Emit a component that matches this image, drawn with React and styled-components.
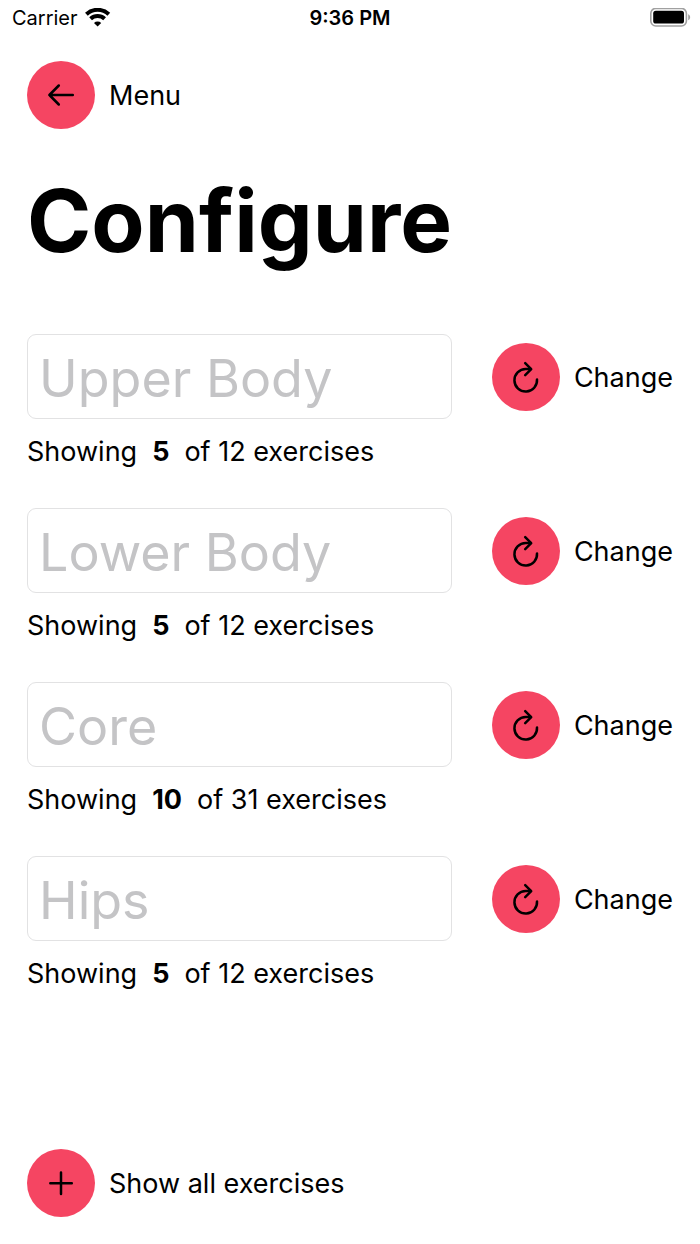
import React from 'react';
import styled, { createGlobalStyle } from 'styled-components';

const groups = [
  { id: 'upper', name: 'Upper Body', shown: 5, total: 12 },
  { id: 'lower', name: 'Lower Body', shown: 5, total: 12 },
  { id: 'core', name: 'Core', shown: 10, total: 31 },
  { id: 'hips', name: 'Hips', shown: 5, total: 12 },
];

const WifiIcon = () => (
  <svg width="26" height="20" viewBox="0 0 26 20" aria-hidden="true">
    <g fill="none" stroke="#000" strokeWidth="4">
      <path d="M1.4 6.2a16.4 16.4 0 0 1 22.4 0" />
      <path d="M5.6 10.8a10.2 10.2 0 0 1 14 0" />
    </g>
    <path d="M12.6 18.4l-3.6-3.5a5.2 5.2 0 0 1 7.2 0z" />
  </svg>
);

const BatteryIcon = () => (
  <svg width="42" height="20" viewBox="0 0 42 20" role="img" aria-label="Battery full">
    <rect x="0.8" y="0.4" width="35.6" height="17.6" rx="5" fill="none" stroke="#a0a0a0" strokeWidth="1.6" />
    <rect x="3.2" y="2.8" width="30.8" height="12.8" rx="2.6" />
    <path d="M38.2 6.2c2.6.9 2.6 5.1 0 6z" fill="#a0a0a0" />
  </svg>
);

const BackIcon = () => (
  <Icon viewBox="0 0 68 68" aria-hidden="true">
    <path d="M45.8 34H22.4M31.8 24.5L22.4 34l9.4 9.5" />
  </Icon>
);

const RedoIcon = () => (
  <Icon viewBox="0 0 68 68" aria-hidden="true">
    <path d="M45 36.4A11.3 11.3 0 1 1 33.7 26h5" />
    <path d="M33.2 20.2l6 6-6 6" />
  </Icon>
);

const PlusIcon = () => (
  <Icon viewBox="0 0 68 68" aria-hidden="true">
    <path d="M34 23.5v21.5M23.3 34.2h21.5" />
  </Icon>
);

const App = () => {
  return (
    <>
      <GlobalStyle />
      <Screen>
        <StatusBar>
          <Carrier>Carrier <WifiIcon /></Carrier>
          <Time>9:36 PM</Time>
          <Battery><BatteryIcon /></Battery>
        </StatusBar>
        <Content>
          <RoundButton type="button">
            <Circle><BackIcon /></Circle>
            <Label>Menu</Label>
          </RoundButton>
          <Title>Configure</Title>
          <Groups>
            {groups.map(group => (
              <li key={group.id}>
                <Row>
                  <NameInput type="text" aria-label={group.name} placeholder={group.name} />
                  <RoundButton type="button">
                    <Circle><RedoIcon /></Circle>
                    <Label>Change</Label>
                  </RoundButton>
                </Row>
                <Summary>
                  <span>Showing</span>
                  <strong>{group.shown}</strong>
                  <span>of {group.total} exercises</span>
                </Summary>
              </li>
            ))}
          </Groups>
          <Footer>
            <RoundButton type="button">
              <Circle><PlusIcon /></Circle>
              <Label>Show all exercises</Label>
            </RoundButton>
          </Footer>
        </Content>
      </Screen>
    </>
  );
}

const GlobalStyle = createGlobalStyle`
  * {
    box-sizing: border-box;
  }
  body {
    margin: 0;
    background: #fff;
    color: #000;
    font-family: Inter, "Liberation Sans", sans-serif;
  }
`

const Screen = styled.div`
  min-height: 100vh;
  display: flex;
  flex-direction: column;
`

const StatusBar = styled.header`
  display: grid;
  grid-template-columns: 1fr auto 1fr;
  align-items: center;
  height: 36px;
  padding: 0 8px;
  font-size: 20px;
`

const Carrier = styled.span`
  display: flex;
  align-items: center;
  gap: 7px;
  padding-left: 4px;
`

const Time = styled.span`
  font-weight: 600;
`

const Battery = styled.span`
  display: flex;
  justify-content: flex-end;
`

const Content = styled.main`
  flex: 1;
  display: flex;
  flex-direction: column;
  align-items: stretch;
  padding: 25px 27px 27px;
`

const RoundButton = styled.button`
  display: flex;
  align-items: center;
  align-self: flex-start;
  gap: 14px;
  padding: 0;
  border: 0;
  background: none;
  color: inherit;
  font-family: inherit;
  font-size: 27px;
  line-height: 34px;
  white-space: nowrap;
  cursor: pointer;
`

const Circle = styled.span`
  flex: none;
  width: 68px;
  height: 68px;
  border-radius: 50%;
  background: #f54562;
`

const Label = styled.span`
  padding-top: 2px;
`

const Icon = styled.svg`
  display: block;
  width: 100%;
  height: 100%;
  fill: none;
  stroke: #000;
  stroke-width: 2.5;
  stroke-linecap: round;
  stroke-linejoin: round;
`

const Title = styled.h1`
  margin: 34px 0 56px;
  font-size: 87px;
  font-weight: 700;
  line-height: 115px;
`

const Groups = styled.ul`
  display: flex;
  flex-direction: column;
  gap: 39px;
  margin: 0;
  padding: 0;
  list-style: none;
`

const Row = styled.div`
  display: flex;
  align-items: center;
  gap: 40px;

  ${RoundButton} {
    align-self: center;
  }
`

const NameInput = styled.input`
  flex: 1;
  min-width: 0;
  height: 85px;
  padding: 3px 11px 0;
  border: 1px solid #e2e2e3;
  border-radius: 9px;
  background: #fff;
  color: inherit;
  font-family: inherit;
  font-size: 52px;

  &::placeholder {
    color: #c4c4c6;
    opacity: 1;
  }
`

const Summary = styled.p`
  display: flex;
  gap: 15px;
  margin: 16px 0 0;
  font-size: 27px;
  line-height: 34px;
`

const Footer = styled.footer`
  margin-top: auto;
  padding-top: 40px;
`

export default App;
